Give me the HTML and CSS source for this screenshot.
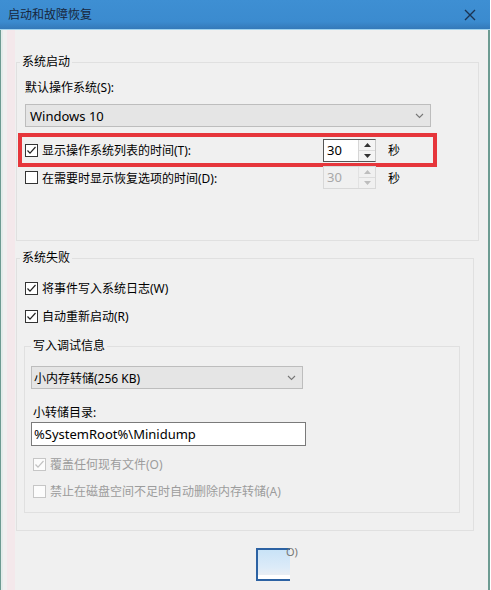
FILE: index.html
```html
<!DOCTYPE html>
<html lang="zh-CN">
<head>
  <meta charset="UTF-8">
  <title>启动和故障恢复</title>
  <link rel="stylesheet" href="styles.css">
</head>
<body>
  <div class="window">
    <div class="titlebar">
      <span class="title">启动和故障恢复</span>
      <svg class="close" width="12" height="12" viewBox="0 0 12 12"><path d="M1 1L11 11M11 1L1 11" stroke="#1b3352" stroke-width="1.4" fill="none"/></svg>
    </div>
    <div class="content">
      <fieldset class="group startup">
        <legend>系统启动</legend>
        <div class="label">默认操作系统(S):</div>
        <div class="select os">
          <span>Windows 10</span>
          <svg width="9" height="6" viewBox="0 0 9 6"><path d="M1 1L4.5 4.5L8 1" stroke="#777" stroke-width="1.1" fill="none"/></svg>
        </div>
        <div class="row highlight">
          <span class="check"><svg width="11" height="11" viewBox="0 0 11 11"><path d="M1.5 5.5L4 8.2L9.5 2" stroke="#222" stroke-width="1.2" fill="none"/></svg></span>
          <span class="text">显示操作系统列表的时间(T):</span>
          <div class="spin">
            <span class="num">30</span>
            <span class="arrows">
              <span class="up"><svg width="7" height="4" viewBox="0 0 7 4"><path d="M0 4L3.5 0L7 4Z" fill="#333"/></svg></span>
              <span class="down"><svg width="7" height="4" viewBox="0 0 7 4"><path d="M0 0L3.5 4L7 0Z" fill="#333"/></svg></span>
            </span>
          </div>
          <span class="unit">秒</span>
        </div>
        <div class="row second">
          <span class="check"></span>
          <span class="text">在需要时显示恢复选项的时间(D):</span>
          <div class="spin disabled">
            <span class="num">30</span>
            <span class="arrows">
              <span class="up"><svg width="7" height="4" viewBox="0 0 7 4"><path d="M0 4L3.5 0L7 4Z" fill="#bdbdbd"/></svg></span>
              <span class="down"><svg width="7" height="4" viewBox="0 0 7 4"><path d="M0 0L3.5 4L7 0Z" fill="#bdbdbd"/></svg></span>
            </span>
          </div>
          <span class="unit">秒</span>
        </div>
      </fieldset>

      <fieldset class="group failure">
        <legend>系统失败</legend>
        <div class="row cb first">
          <span class="check"><svg width="11" height="11" viewBox="0 0 11 11"><path d="M1.5 5.5L4 8.2L9.5 2" stroke="#222" stroke-width="1.2" fill="none"/></svg></span>
          <span>将事件写入系统日志(W)</span>
        </div>
        <div class="row cb">
          <span class="check"><svg width="11" height="11" viewBox="0 0 11 11"><path d="M1.5 5.5L4 8.2L9.5 2" stroke="#222" stroke-width="1.2" fill="none"/></svg></span>
          <span>自动重新启动(R)</span>
        </div>

        <fieldset class="group debug">
          <legend>写入调试信息</legend>
          <div class="select dump">
            <span>小内存转储(256 KB)</span>
            <svg width="9" height="6" viewBox="0 0 9 6"><path d="M1 1L4.5 4.5L8 1" stroke="#777" stroke-width="1.1" fill="none"/></svg>
          </div>
          <div class="label dir">小转储目录:</div>
          <div class="textbox">%SystemRoot%\Minidump</div>
          <div class="row cb off overwrite">
            <span class="check"><svg width="11" height="11" viewBox="0 0 11 11"><path d="M1.5 5.5L4 8.2L9.5 2" stroke="#c2c2c2" stroke-width="1.2" fill="none"/></svg></span>
            <span>覆盖任何现有文件(O)</span>
          </div>
          <div class="row cb off">
            <span class="check"></span>
            <span>禁止在磁盘空间不足时自动删除内存转储(A)</span>
          </div>
        </fieldset>
      </fieldset>

      <div class="dock">
        <div class="thumb"></div>
        <span class="thumb-label">O)</span>
      </div>
    </div>
  </div>
</body>
</html>
```

FILE: styles.css
```css
body { margin: 0; background: #fff; font-family: "Noto Sans", "Noto Sans CJK SC", sans-serif; font-size: 12px; color: #000; }
.window { width: 490px; height: 590px; overflow: hidden; background: linear-gradient(to right, #6d9b92 0 1px, #e2ecea 1px 3px, #f0f0f0 3px 7px, #f4e8eb 7px 15px, #f0f0f0 15px calc(100% - 2px), #6d9b92 calc(100% - 2px)); }

.titlebar { height: 29px; display: flex; align-items: center; justify-content: space-between; padding: 0 14px 0 8px; background: linear-gradient(#3e8fd3, #3b8bcf 75%, #3479b9); border-bottom: 1px solid #a3d4ee; }
.title { color: #17263c; font-size: 12px; line-height: 29px; }

.content { padding-top: 24px; }

.group { border: 1px solid #e0e0e0; margin: 0; padding: 0 8px; box-sizing: border-box; min-width: 0; }
.group legend { padding: 0 2px; margin-left: -5px; line-height: 16px; }
.startup { margin-left: 16px; width: 463px; height: 187px; }
.failure { margin: 9px 0 0 16px; width: 458px; height: 281px; }
.debug { margin: 14px 0 0 -1px; width: 436px; height: 175px; padding: 0 6px; }
.debug legend { margin-left: 0; }

.label { line-height: 16px; margin-top: 10px; }
.label.dir { margin-top: 16px; padding-left: 2px; }

.select { display: flex; align-items: center; justify-content: space-between; height: 23px; box-sizing: border-box; border: 1px solid #bdbdbd; background: #e5e5e5; padding: 0 6px 0 4px; font-size: 12px; }
.select.os { width: 406px; margin-top: 8px; font-size: 13px; }
.select.dump { width: 272px; margin-top: 12px; padding-left: 2px; }

.row { display: flex; align-items: center; }
.row.highlight { margin: 6px 0 0 -7px; width: 419px; height: 34px; box-sizing: border-box; border: 4px solid #e6363b; padding-left: 3px; }
.row.second { margin-top: -1px; height: 23px; }
.row .text { width: 281px; }
.unit { margin-left: 12px; }

.check { width: 13px; height: 13px; box-sizing: border-box; border: 1px solid #333; background: #fff; margin-right: 4px; display: flex; align-items: center; justify-content: center; flex: none; }
.check svg { display: block; }

.spin { display: flex; width: 53px; height: 23px; box-sizing: border-box; border: 1px solid #555; border-right-color: #c8c8c8; background: #fff; }
.num { flex: 1; padding-left: 3px; line-height: 21px; font-size: 13px; }
.arrows { width: 16px; display: flex; flex-direction: column; border-left: 1px solid #d6d6d6; background: #f4f4f4; }
.arrows span { flex: 1; display: flex; align-items: center; justify-content: center; }
.arrows .up { border-bottom: 1px solid #dcdcdc; }
.arrows svg { display: block; }
.spin.disabled { border-color: #d8d8d8; background: #f0f0f0; }
.spin.disabled .num { color: #a8a8a8; }
.spin.disabled .arrows { background: #f0f0f0; border-left-color: #e2e2e2; }

.row.cb { height: 16px; margin-top: 12px; }
.row.cb.first { margin-top: 14px; }
.row.cb.overwrite { margin-top: 10px; }
.row.cb.off { padding-left: 2px; color: #9c9c9c; }
.row.cb.off:last-child { margin-top: 11px; }
.row.cb.off .check { border-color: #c6c6c6; background: #fcfcfc; }

.textbox { margin-top: 1px; width: 275px; height: 24px; box-sizing: border-box; border: 1px solid #7a7a7a; background: #fff; padding-left: 2px; line-height: 22px; font-size: 13px; }

.dock { display: flex; align-items: flex-start; margin: 17px 0 0 256px; }
.thumb { width: 32px; height: 29px; border-top: 2px solid #2c62a3; border-left: 2px solid #2c62a3; border-bottom: 2px solid #2c62a3; background: linear-gradient(#c9e3f7, #dcebf8 60%, #e9eef4 85%, #fff 85%); }
.thumb-label { margin: -4px 0 0 -4px; color: #777; font-size: 11px; }
```
